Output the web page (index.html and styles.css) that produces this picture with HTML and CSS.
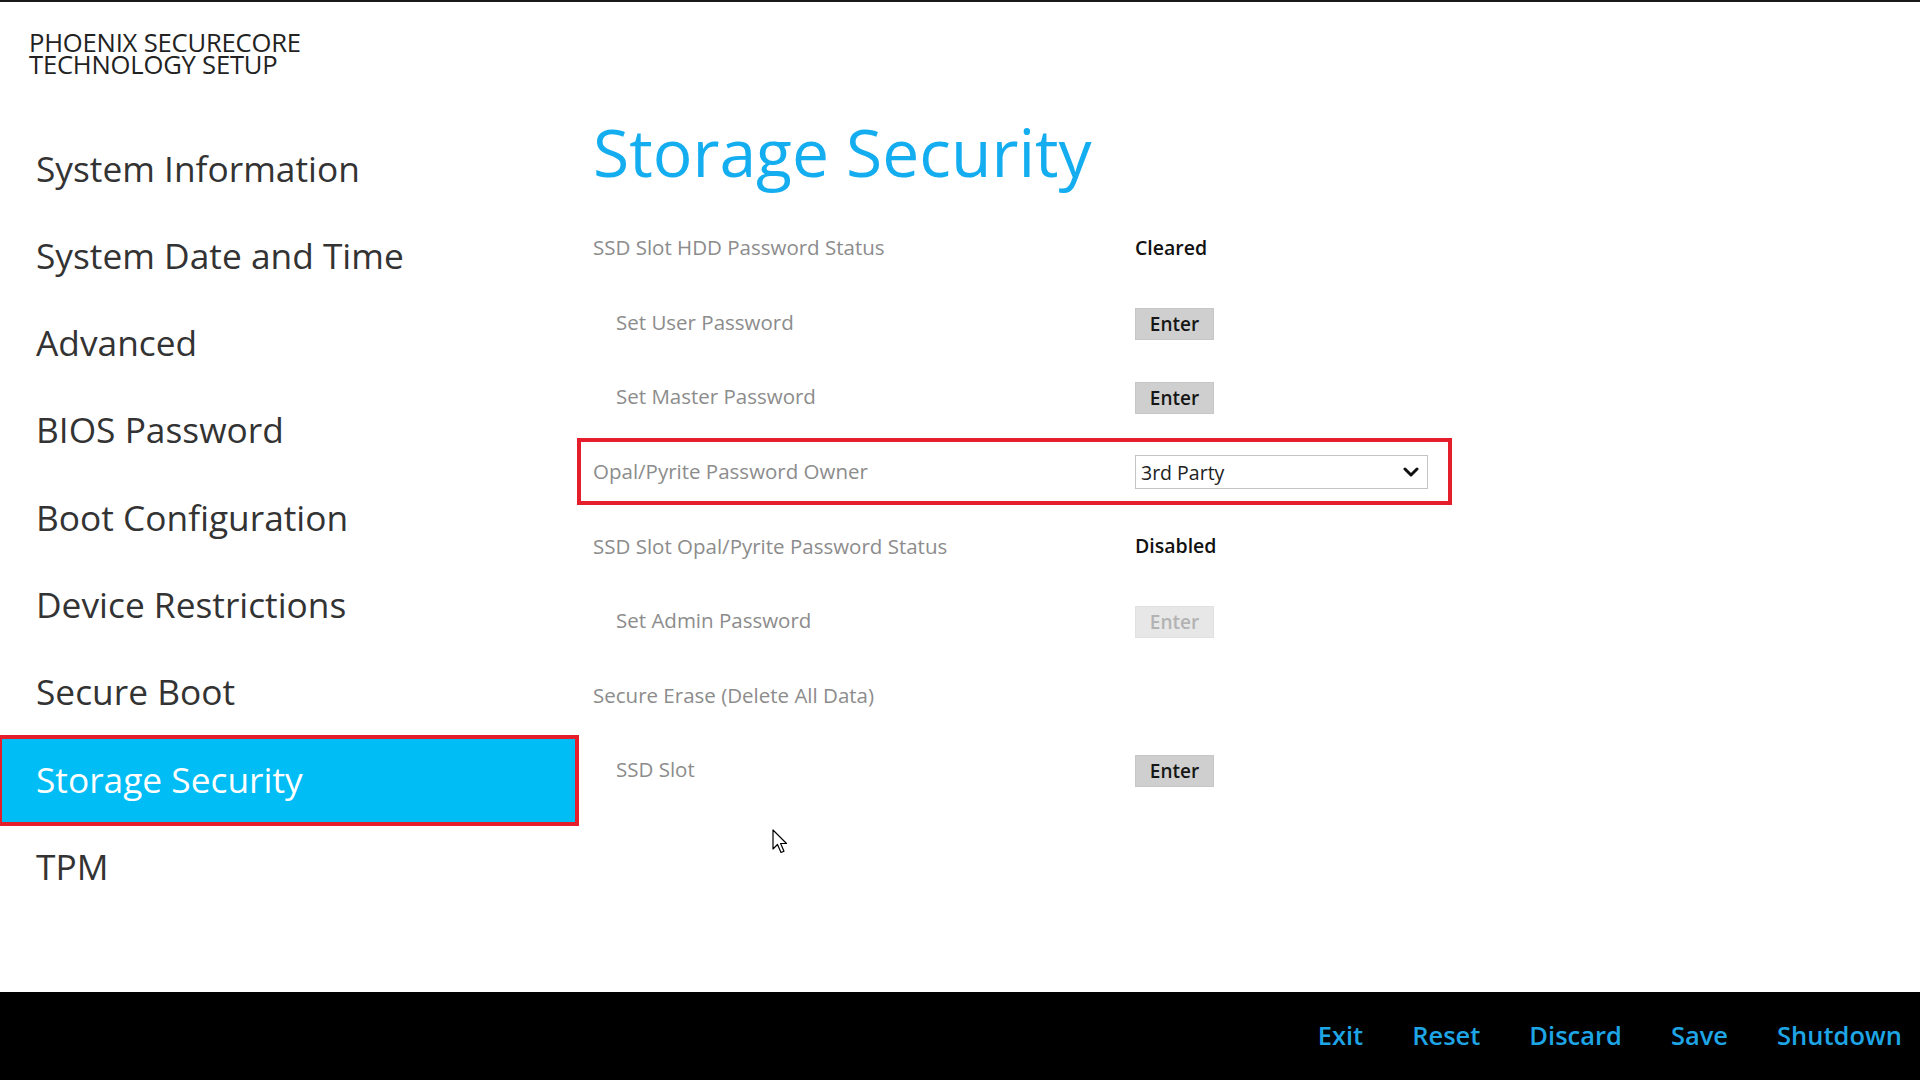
FILE: index.html
```html
<!DOCTYPE html>
<html lang="en">
<head>
<meta charset="utf-8">
<title>Phoenix SecureCore Technology Setup - Storage Security</title>
<link rel="stylesheet" href="styles.css">
</head>
<body>
<div class="app">
  <div class="main">
    <aside class="sidebar">
      <div class="brand">
        <div class="brand-line">PHOENIX SECURECORE</div>
        <div class="brand-line">TECHNOLOGY SETUP</div>
      </div>
      <nav class="nav">
        <div class="nav-item">System Information</div>
        <div class="nav-item">System Date and Time</div>
        <div class="nav-item">Advanced</div>
        <div class="nav-item">BIOS Password</div>
        <div class="nav-item">Boot Configuration</div>
        <div class="nav-item">Device Restrictions</div>
        <div class="nav-item">Secure Boot</div>
        <div class="nav-item active">Storage Security</div>
        <div class="nav-item">TPM</div>
      </nav>
    </aside>
    <section class="content">
      <h1 class="title">Storage Security</h1>
      <div class="rows">
        <div class="row">
          <div class="label">SSD Slot HDD Password Status</div>
          <div class="value">Cleared</div>
        </div>
        <div class="row">
          <div class="label sub">Set User Password</div>
          <div class="btn">Enter</div>
        </div>
        <div class="row">
          <div class="label sub">Set Master Password</div>
          <div class="btn">Enter</div>
        </div>
        <div class="row highlight">
          <div class="label">Opal/Pyrite Password Owner</div>
          <div class="select">
            <span class="select-text">3rd Party</span>
            <svg class="chevron" width="16" height="11" viewBox="0 0 16 11"><path d="M2 2 L8 8 L14 2" fill="none" stroke="#111" stroke-width="3" stroke-linecap="round" stroke-linejoin="round"/></svg>
          </div>
        </div>
        <div class="row">
          <div class="label">SSD Slot Opal/Pyrite Password Status</div>
          <div class="value">Disabled</div>
        </div>
        <div class="row">
          <div class="label sub">Set Admin Password</div>
          <div class="btn disabled">Enter</div>
        </div>
        <div class="row">
          <div class="label">Secure Erase (Delete All Data)</div>
        </div>
        <div class="row">
          <div class="label sub">SSD Slot</div>
          <div class="btn">Enter</div>
        </div>
      </div>
    </section>
  </div>
  <footer class="footer">
    <span class="fbtn">Exit</span>
    <span class="fbtn">Reset</span>
    <span class="fbtn">Discard</span>
    <span class="fbtn">Save</span>
    <span class="fbtn">Shutdown</span>
  </footer>
  <svg class="cursor" width="16" height="26" viewBox="0 0 16 26"><path d="M1 1 L1 20 L5.5 15.5 L9 23.5 L12 22.2 L8.6 14.5 L14.5 14.5 Z" fill="#fff" stroke="#000" stroke-width="1.2" stroke-linejoin="round"/></svg>
</div>
</body>
</html>
```

FILE: styles.css
```css
* { box-sizing: border-box; }
html, body {
  margin: 0;
  padding: 0;
  width: 1920px;
  height: 1080px;
  overflow: hidden;
  background: #fff;
  font-family: "Open Sans", "Noto Sans", "DejaVu Sans", sans-serif;
}
.app {
  position: relative;
  width: 1920px;
  height: 1080px;
  border-top: 2px solid #1a1a1a;
  display: grid;
  grid-template-rows: 1fr 88px;
}
.main {
  display: flex;
  min-height: 0;
}
.sidebar {
  width: 577px;
  flex: none;
}
.brand {
  margin-top: 30px;
  padding-left: 29px;
  color: #222;
}
.brand-line {
  font-size: 25.6px;
  line-height: 22px;
  height: 22px;
  letter-spacing: -0.2px;
  font-weight: 400;
}
.nav {
  margin-top: 49.5px;
}
.nav-item {
  height: 87.3px;
  line-height: 85px;
  padding-left: 36px;
  font-size: 35.3px;
  color: #333;
  white-space: nowrap;
}
.nav-item.active {
  background: #00bdf6;
  color: #fff;
  outline: 4px solid #e41e2b;
  outline-offset: -2px;
}
.content {
  flex: 1;
  padding-left: 16px;
}
.title {
  margin: 109px 0 0 0;
  font-size: 66px;
  line-height: 80px;
  font-weight: 400;
  color: #14aef0;
}
.rows {
  margin-top: 19px;
}
.row {
  height: 74.6px;
  display: flex;
  align-items: center;
}
.row.highlight {
  margin: 3.8px 0 3.8px -16px;
  height: 67px;
  width: 875px;
  border: 4px solid #e41e2b;
  padding-left: 12px;
}
.label {
  width: 542px;
  flex: none;
  font-size: 20.5px;
  color: #8c8c8c;
}
.label.sub {
  padding-left: 23px;
}
.value {
  font-size: 19.5px;
  font-weight: 600;
  color: #111;
}
.btn {
  width: 79px;
  height: 32px;
  margin-top: 4px;
  display: flex;
  align-items: center;
  justify-content: center;
  background: #cfcfcf;
  border: 1px solid #c6c6c6;
  font-size: 19px;
  font-weight: 600;
  color: #161616;
}
.btn.disabled {
  background: #e7e7e7;
  border-color: #e0e0e0;
  color: #b3b3b3;
}
.select {
  width: 293px;
  height: 34px;
  margin-top: 2px;
  border: 1px solid #c4c4c4;
  background: #fff;
  display: flex;
  align-items: center;
  justify-content: space-between;
  padding: 0 8px 0 5px;
}
.select-text {
  font-size: 19.5px;
  color: #222;
}
.chevron {
  display: block;
}
.footer {
  background: #000;
  display: flex;
  justify-content: flex-end;
  align-items: center;
  gap: 49px;
  padding: 0 18px 2px 0;
}
.fbtn {
  font-size: 25.5px;
  font-weight: 600;
  color: #1ea5e6;
}
.cursor {
  position: absolute;
  left: 772px;
  top: 827px;
}
```
